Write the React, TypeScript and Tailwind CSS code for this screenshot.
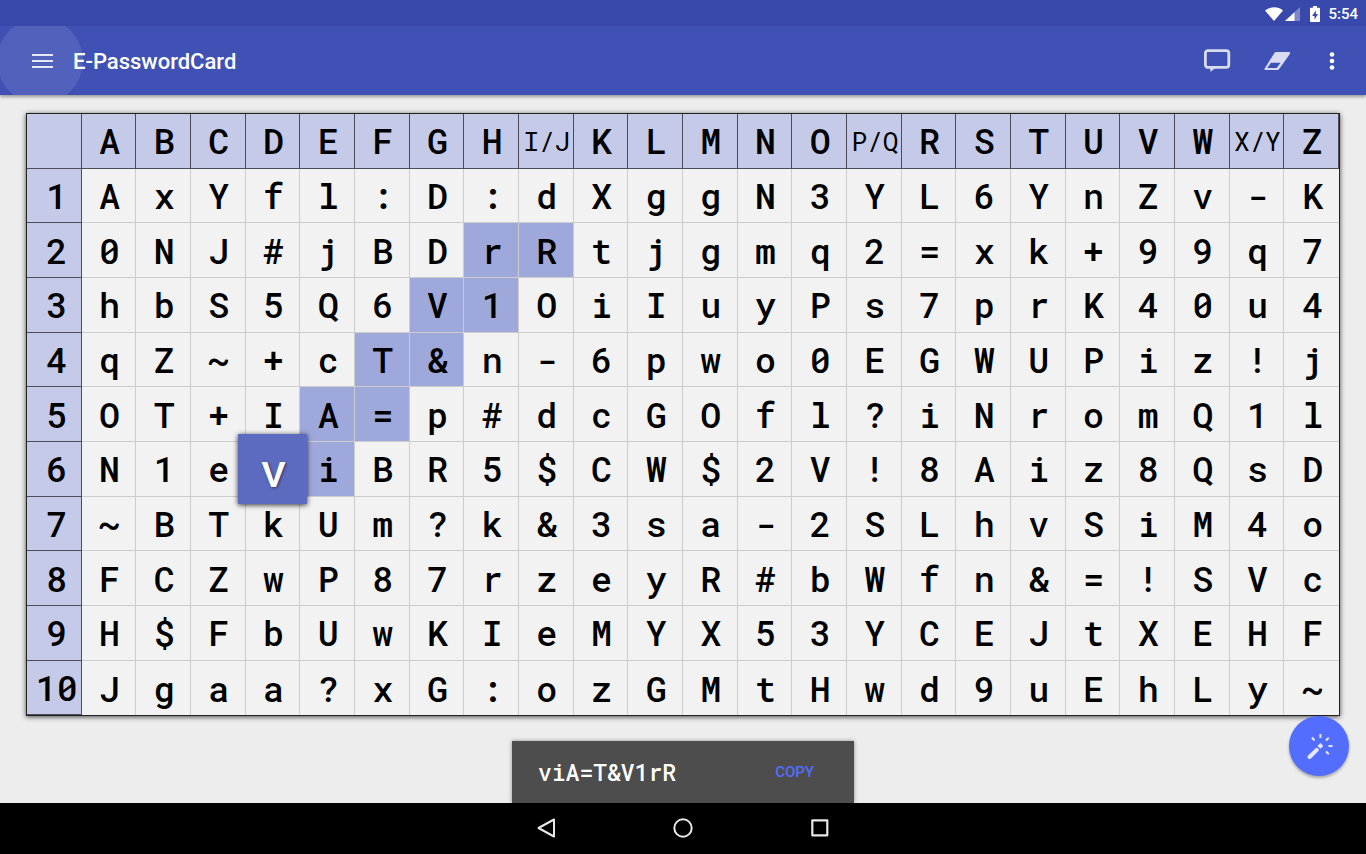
import { clsx } from "clsx";

const columns = "A B C D E F G H I/J K L M N O P/Q R S T U V W X/Y Z".split(" ");

const rows = [
  "AxYfl:D:dXggN3YL6YnZv-K",
  "0NJ#jBDrRtjgmq2=xk+99q7",
  "hbS5Q6V1OiIuyPs7prK40u4",
  "qZ~+cT&n-6pwo0EGWUPiz!j",
  "OT+IA=p#dcGOfl?iNromQ1l",
  "N1eviBR5$CW$2V!8Aiz8QsD",
  "~BTkUm?k&3sa-2SLhvSiM4o",
  "FCZwP87rzeyR#bWfn&=!SVc",
  "H$FbUwKIeMYX53YCEJtXEHF",
  "Jgaa?xG:ozGMtHwd9uEhLy~",
];

const path = ["5-4", "4-4", "4-5", "3-5", "3-6", "2-6", "2-7", "1-7", "1-8"];
const start = "5-3";

const mono = "font-['Roboto_Mono','Noto_Sans_Mono','DejaVu_Sans_Mono',monospace]";
const cell = "relative flex aspect-square min-h-0 items-center justify-center py-0 pr-0";
const heading = "border-r border-b border-[#4a4c5a] bg-[#c5cae9] font-medium";

function StatusBar() {
  return (
    <div className="flex h-[26px] items-center justify-end bg-[#3949ab] pt-px pr-2 text-white">
      <svg className="h-4 w-5" viewBox="0 0 20 16" fill="currentColor" aria-hidden="true">
        <path d="M10 15 1 4.5C6 .2 14 .2 19 4.5Z" />
      </svg>
      <svg className="h-4 w-[17px]" viewBox="0 0 17 16" fill="currentColor" aria-hidden="true">
        <path d="M16 1v14H1Z" opacity=".35" />
        <path d="M10.5 6.2V15H1Z" />
      </svg>
      <svg className="ml-2 h-4 w-3" viewBox="0 0 12 16" aria-hidden="true">
        <path fill="currentColor" d="M4 0h4v1.7h2.2c.5 0 .8.3.8.8v12.7c0 .5-.3.8-.8.8H1.8c-.5 0-.8-.3-.8-.8V2.5c0-.5.3-.8.8-.8H4Z" />
        <path fill="#3949ab" d="M6.8 4.3 3.2 10h2.3v3.8L9 8H6.8Z" />
      </svg>
      <span className="ml-[7px] text-[15px] leading-4 font-medium">5:54</span>
    </div>
  );
}

function AppBar() {
  return (
    <header className="flex h-[69px] items-center overflow-hidden bg-[#3f51b5] text-white">
      <button
        type="button"
        aria-label="Open menu"
        className="-ml-[3px] flex size-[86px] shrink-0 items-center justify-center rounded-full bg-white/10 pl-1"
      >
        <svg className="h-4 w-[21px] opacity-85" viewBox="0 0 21 16" fill="currentColor" aria-hidden="true">
          <path d="M0 1h21v2H0zM0 7h21v2H0zM0 13h21v2H0z" />
        </svg>
      </button>
      <h1 className="-ml-[10px] pt-0.5 text-[22px] font-medium">E-PasswordCard</h1>
      <div className="ml-auto flex items-center gap-8 pr-[25px] text-[#d9dcf0]">
        <button type="button" aria-label="Comment">
          <svg className="h-6 w-7" viewBox="0 0 28 24" fill="none" stroke="currentColor" strokeWidth="2.8" aria-hidden="true">
            <rect x="2.4" y="1.6" width="23.4" height="16.8" rx="2.6" />
            <path fill="currentColor" stroke="none" d="M7 18.5h6l-5.5 4.3Z" />
          </svg>
        </button>
        <button type="button" aria-label="Erase">
          <svg className="h-6 w-7" viewBox="0 0 28 24" aria-hidden="true">
            <path
              fill="currentColor"
              fillRule="evenodd"
              d="M13.3 3H26q1.8 0 1 1.7L16.4 19.8Q15.7 21 14.2 21H2.5Q.7 21 1.8 19.2L11.4 4Q12.1 3 13.3 3ZM8 13.7 4.3 19h9.3l4-5.3Z"
            />
          </svg>
        </button>
        <button type="button" aria-label="More options" className="text-white">
          <svg className="h-6 w-[18px]" viewBox="0 0 18 24" fill="currentColor" aria-hidden="true">
            <circle cx="9" cy="5.5" r="2.3" />
            <circle cx="9" cy="12" r="2.3" />
            <circle cx="9" cy="18.5" r="2.3" />
          </svg>
        </button>
      </div>
    </header>
  );
}

function PasswordGrid() {
  return (
    <table
      className={clsx(
        mono,
        "mx-[26px] grid grid-cols-[repeat(24,minmax(0,1fr))] border border-[#222] bg-[#f2f2f2] text-[35px] leading-none font-medium text-black shadow-[0_1px_5px_rgba(0,0,0,0.7)]",
      )}
    >
      <thead className="contents">
        <tr className="contents">
          <th className={clsx(cell, heading)} aria-label="Row" />
          {columns.map((name) => (
            <th
              key={name}
              scope="col"
              className={clsx(cell, heading, "pl-0.5", name.length > 1 && "text-[26px] font-normal")}
            >
              {name}
            </th>
          ))}
        </tr>
      </thead>
      <tbody className="contents">
        {rows.map((row, r) => (
          <tr key={r} className="contents">
            <th scope="row" className={clsx(cell, heading, "pl-1.5")}>
              {r + 1}
            </th>
            {row.split("").map((char, c) => {
              const id = `${r}-${c}`;
              return (
                <td
                  key={c}
                  className={clsx(
                    cell,
                    "pl-0.5",
                    c < 22 && "border-r border-[#ccc]",
                    r < 9 && "border-b border-[#ccc]",
                    path.includes(id) && "bg-[#9fa8da]",
                  )}
                >
                  {id === start ? (
                    <span className="absolute -inset-2 z-10 flex items-center justify-center bg-[#5c6bc0] pl-0.5 text-[46px] text-white shadow-[0_1px_5px_rgba(0,0,0,0.8)] [text-shadow:1px_1px_3px_rgba(0,0,0,0.5)]">
                      {char}
                    </span>
                  ) : (
                    char
                  )}
                </td>
              );
            })}
          </tr>
        ))}
      </tbody>
    </table>
  );
}

function Snackbar() {
  return (
    <div className="mx-auto mt-auto flex h-[62px] w-[342px] items-center justify-between bg-[#4d4d4d] pr-10 pl-[26px] shadow-[0_0_4px_rgba(0,0,0,0.4)]">
      <output className={clsx(mono, "text-[23px] font-medium text-white")}>viA=T&amp;V1rR</output>
      <button type="button" className="text-[15px] font-medium text-[#536dfe]">
        COPY
      </button>
    </div>
  );
}

function WandButton() {
  return (
    <button
      type="button"
      aria-label="Generate card"
      className="absolute right-[17px] bottom-[27px] flex size-[60px] items-center justify-center rounded-full bg-[#536dfe] text-[#e4e8ff] shadow-[0_2px_3px_rgba(0,0,0,0.3)]"
    >
      <svg className="size-[30px]" viewBox="0 0 30 30" fill="none" stroke="currentColor" strokeWidth="2" aria-hidden="true">
        <path strokeWidth="4" strokeLinecap="round" d="M5.5 26 12.8 18.8" />
        <path fill="currentColor" stroke="none" d="m16.4 12 2.9 2.9-2.9 2.9-2.9-2.9Z" />
        <path d="M16.4 3v4M8 6.5l2.5 3M24.7 6.7l-2.8 2.8M24.5 15h4M22 20.5l2.8 2.8" />
      </svg>
    </button>
  );
}

function NavigationBar() {
  return (
    <nav className="relative z-10 flex h-[51px] items-center justify-center gap-[113px] bg-black pb-px text-[#e8e8e8]">
      <button type="button" aria-label="Back">
        <svg className="size-6" viewBox="0 0 24 24" fill="none" stroke="currentColor" strokeWidth="2" strokeLinejoin="round" aria-hidden="true">
          <path d="M20 3.5v17L4.5 12Z" />
        </svg>
      </button>
      <button type="button" aria-label="Home">
        <svg className="size-6" viewBox="0 0 24 24" fill="none" stroke="currentColor" strokeWidth="2" aria-hidden="true">
          <circle cx="12" cy="12" r="8.7" />
        </svg>
      </button>
      <button type="button" aria-label="Recent apps">
        <svg className="size-6" viewBox="0 0 24 24" fill="none" stroke="currentColor" strokeWidth="2.2" strokeLinejoin="round" aria-hidden="true">
          <rect x="4.3" y="4.3" width="15" height="15" />
        </svg>
      </button>
    </nav>
  );
}

export default function App() {
  return (
    <div className="flex min-h-screen flex-col font-[Roboto,sans-serif]">
      <StatusBar />
      <div className="relative z-10 shadow-[0_2px_3px_rgba(0,0,0,0.35)]">
        <AppBar />
      </div>
      <main className="relative flex flex-1 flex-col bg-[#ededed] pt-[18px]">
        <PasswordGrid />
        <Snackbar />
        <WandButton />
      </main>
      <NavigationBar />
    </div>
  );
}
